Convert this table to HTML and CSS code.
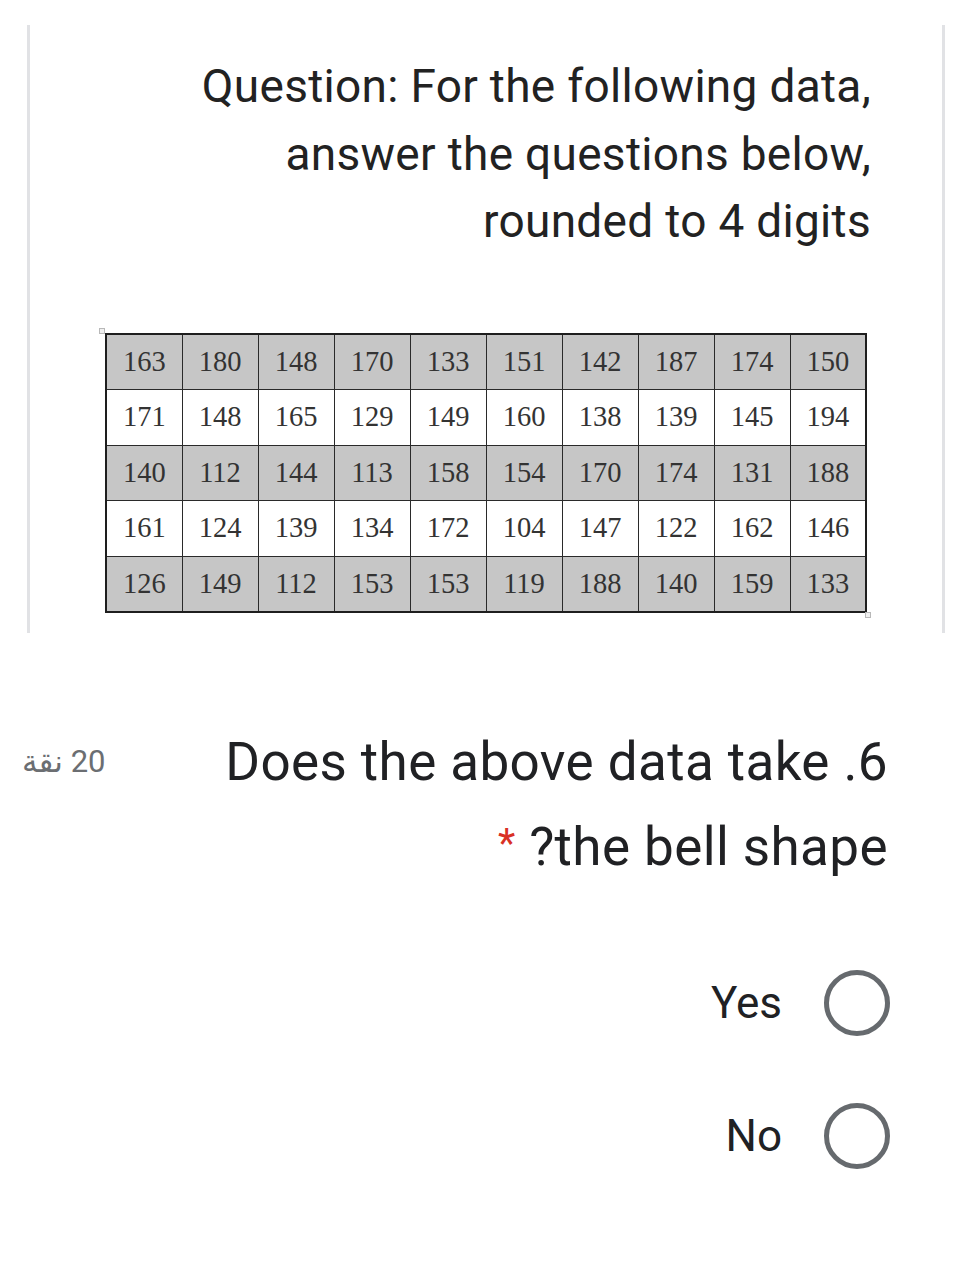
FILE: index.html
```html
<!DOCTYPE html>
<html lang="en">
<head>
<meta charset="utf-8">
<title>Form question</title>
<link rel="stylesheet" href="styles.css">
</head>
<body>
<div class="page">
  <section class="card">
    <div class="title">
      <div>Question: For the following data,</div>
      <div>answer the questions below,</div>
      <div>rounded to 4 digits</div>
    </div>
    <div class="table-wrap">
      <span class="handle handle-tl"></span>
      <table class="data">
        <tr class="shaded"><td>163</td><td>180</td><td>148</td><td>170</td><td>133</td><td>151</td><td>142</td><td>187</td><td>174</td><td>150</td></tr>
        <tr><td>171</td><td>148</td><td>165</td><td>129</td><td>149</td><td>160</td><td>138</td><td>139</td><td>145</td><td>194</td></tr>
        <tr class="shaded"><td>140</td><td>112</td><td>144</td><td>113</td><td>158</td><td>154</td><td>170</td><td>174</td><td>131</td><td>188</td></tr>
        <tr><td>161</td><td>124</td><td>139</td><td>134</td><td>172</td><td>104</td><td>147</td><td>122</td><td>162</td><td>146</td></tr>
        <tr class="shaded"><td>126</td><td>149</td><td>112</td><td>153</td><td>153</td><td>119</td><td>188</td><td>140</td><td>159</td><td>133</td></tr>
      </table>
      <span class="handle handle-br"></span>
    </div>
  </section>

  <section class="question">
    <div class="q-head">
      <div class="points" dir="rtl">20 نقة</div>
      <div class="q-text">
        <div>Does the above data take .6</div>
        <div><span class="req">*</span> ?the bell shape</div>
      </div>
    </div>
    <div class="options">
      <label class="option option-yes"><span class="opt-label">Yes</span><span class="radio"></span></label>
      <label class="option option-no"><span class="opt-label">No</span><span class="radio"></span></label>
    </div>
  </section>
</div>
</body>
</html>
```

FILE: styles.css
```css
html, body {
  margin: 0;
  padding: 0;
  background: #ffffff;
}

body {
  font-family: Roboto, "Noto Sans", "DejaVu Sans", sans-serif;
  color: #202124;
}

.page {
  width: 971px;
  display: flex;
  flex-direction: column;
}

.card {
  margin: 25px 0 0 27px;
  width: 918px;
  box-sizing: border-box;
  border-left: 3px solid #e1e2e5;
  border-right: 3px solid #e1e2e5;
  padding: 28px 0 20px 0;
  display: flex;
  flex-direction: column;
}

.title {
  text-align: right;
  padding-right: 71px;
  font-size: 46px;
  letter-spacing: 0.3px;
  line-height: 67.5px;
  color: #222;
}

.table-wrap {
  position: relative;
  margin: 77px 0 0 75px;
  width: 762px;
}

.data {
  border-collapse: collapse;
  width: 762px;
  border: 2px solid #1e1e1e;
  font-family: "Liberation Serif", "Times New Roman", serif;
  font-size: 28.5px;
  color: #333;
}

.data td {
  border: 1.5px solid #2a2a2a;
  height: 54.5px;
  padding: 0;
  text-align: center;
  width: 10%;
}

.data tr.shaded td {
  background: #c6c6c6;
}

.data tr:not(.shaded) td {
  background: #ffffff;
}

.handle {
  position: absolute;
  width: 4px;
  height: 4px;
  border: 1px solid #b8b8b8;
  background: #f0f0f0;
}

.handle-tl {
  left: -6px;
  top: -5px;
}

.handle-br {
  right: -4px;
  bottom: -5px;
}

.question {
  margin-top: 88px;
  display: flex;
  flex-direction: column;
}

.q-head {
  display: flex;
  justify-content: space-between;
  align-items: flex-start;
  padding: 0 83px 0 22px;
}

.points {
  font-size: 31px;
  line-height: 82px;
  color: #6b6e72;
  font-family: Roboto, "DejaVu Sans", sans-serif;
}

.q-text {
  text-align: right;
  font-size: 53px;
  letter-spacing: 0.4px;
  line-height: 82px;
  color: #202124;
}

.req {
  color: #d93025;
  font-size: 40px;
  vertical-align: 8px;
}

.options {
  display: flex;
  flex-direction: column;
  align-items: flex-end;
  padding-right: 81px;
  margin-top: 82px;
  gap: 67px;
}

.option {
  display: flex;
  align-items: center;
  gap: 42px;
}

.opt-label {
  font-size: 44px;
  color: #202124;
}

.radio {
  width: 56px;
  height: 56px;
  border: 5px solid #666a6e;
  border-radius: 50%;
}
```
